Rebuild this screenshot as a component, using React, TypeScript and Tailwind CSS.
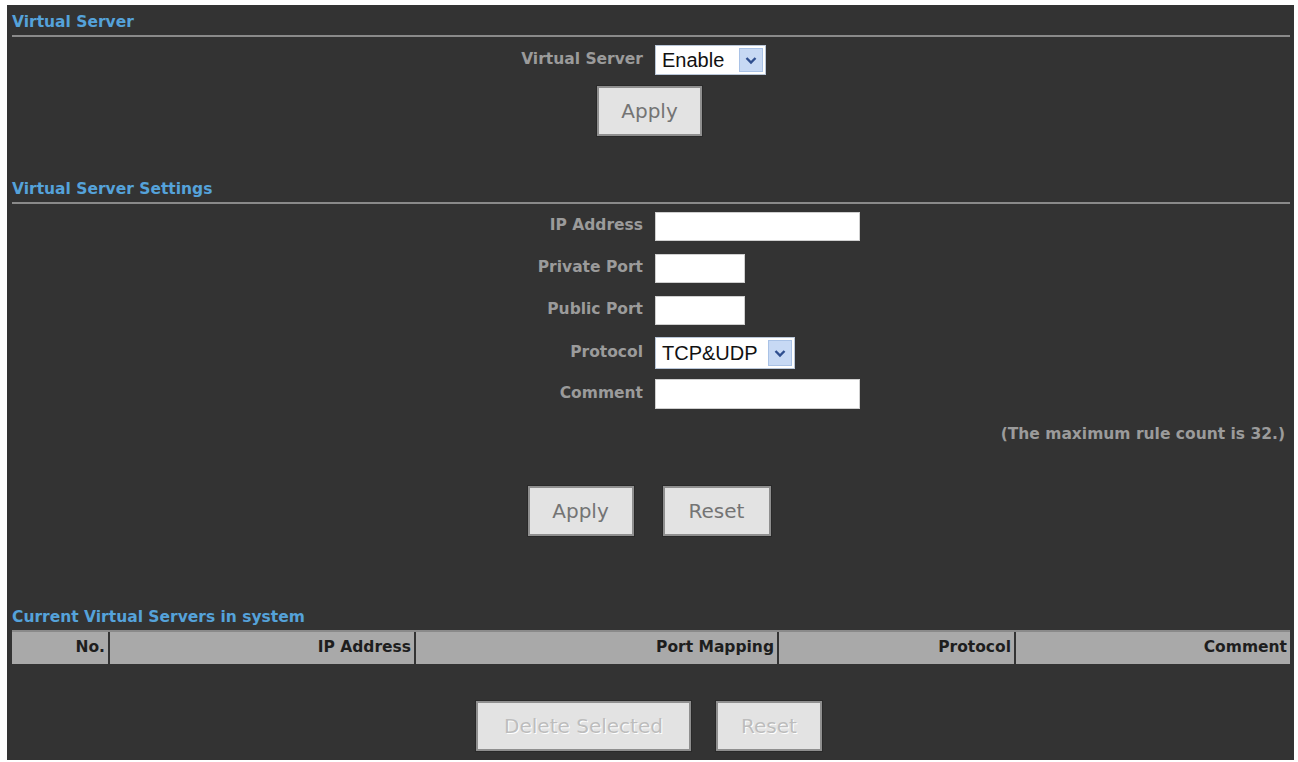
import React from "react";

const labelFont = { fontFamily: '"DejaVu Sans", Verdana, sans-serif' };
const selectFont = { fontFamily: '"Liberation Sans", Arial, sans-serif' };

function SectionTitle({ text, line = true }: { text: string; line?: boolean }) {
  return (
    <div
      className={`text-[15.5px] font-bold leading-[18px] text-[#55a2da] ${
        line ? "pb-[4px] border-b-2 border-[#8a8a8a]" : ""
      }`}
      style={labelFont}
    >
      {text}
    </div>
  );
}

function FakeSelect({ value, width, height }: { value: string; width: string; height: string }) {
  return (
    <div
      className={`flex items-stretch bg-white border border-[#b9c6d8] ${width} ${height}`}
    >
      <div
        className="flex-1 flex items-center pl-[6px] text-[20px] text-[#111] leading-none"
        style={selectFont}
      >
        {value}
      </div>
      <div className="w-[24px] my-[2px] mr-[2px] bg-[#c7d9f4] border border-[#a9c2e6] flex items-center justify-center">
        <svg width="12" height="9" viewBox="0 0 12 9">
          <path d="M1.5 2 L6 6.5 L10.5 2" fill="none" stroke="#2f4f8f" strokeWidth="2.4" />
        </svg>
      </div>
    </div>
  );
}

function Button({
  text,
  width,
  disabled = false,
}: {
  text: string;
  width: string;
  disabled?: boolean;
}) {
  return (
    <div
      className={`h-[50px] ${width} flex items-center justify-center bg-[#e3e3e3] border-2 border-[#8f8f8f] shadow-[0_0_0_1px_#2a2a2a] text-[20px] ${
        disabled ? "text-[#bdbdbd] [text-shadow:1px_1px_0_#ffffff]" : "text-[#747474]"
      }`}
      style={labelFont}
    >
      {text}
    </div>
  );
}

function FormRow({ label, children }: { label: string; children: React.ReactNode }) {
  return (
    <div className="grid grid-cols-2 gap-x-[12px] h-[30px] items-center">
      <div className="text-right text-[15.5px] font-bold text-[#9b9b9b]" style={labelFont}>
        {label}
      </div>
      <div className="flex items-center">{children}</div>
    </div>
  );
}

const columns = [
  { name: "No.", w: "w-[96px]" },
  { name: "IP Address", w: "w-[304px]" },
  { name: "Port Mapping", w: "w-[361px]" },
  { name: "Protocol", w: "w-[235px]" },
  { name: "Comment", w: "w-[274px]" },
];

export default function App() {
  return (
    <div className="bg-white w-[1298px] h-[762px] pt-[5px] pl-[7px]">
      <div className="w-[1287px] h-[755px] bg-[#333333] pl-[5px] pr-[4px] pt-[8px]">
        <SectionTitle text="Virtual Server" />

        <div className="pr-[4px] mt-[8px]">
          <div className="grid grid-cols-2 gap-x-[12px] h-[30px] items-center">
            <div className="text-right text-[15.5px] font-bold text-[#9b9b9b]" style={labelFont}>
              Virtual Server
            </div>
            <FakeSelect value="Enable" width="w-[111px]" height="h-[30px]" />
          </div>
        </div>

        <div className="flex justify-center mt-[11px] pr-[3px]">
          <Button text="Apply" width="w-[105px]" />
        </div>

        <div className="mt-[44px]">
          <SectionTitle text="Virtual Server Settings" />
        </div>

        <div className="pr-[4px] mt-[7px] flex flex-col gap-[12px]">
          <FormRow label="IP Address">
            <div className="w-[205px] h-[29px] bg-white border border-[#cfcfcf]" />
          </FormRow>
          <FormRow label="Private Port">
            <div className="w-[90px] h-[29px] bg-white border border-[#cfcfcf]" />
          </FormRow>
          <FormRow label="Public Port">
            <div className="w-[90px] h-[29px] bg-white border border-[#cfcfcf]" />
          </FormRow>
          <FormRow label="Protocol">
            <FakeSelect value="TCP&UDP" width="w-[140px]" height="h-[32px]" />
          </FormRow>
          <FormRow label="Comment">
            <div className="w-[205px] h-[30px] bg-white border border-[#cfcfcf]" />
          </FormRow>
        </div>

        <div
          className="mt-[16px] text-right pr-[5px] text-[15.5px] font-bold leading-[18px] text-[#9b9b9b]"
          style={labelFont}
        >
          (The maximum rule count is 32.)
        </div>

        <div className="flex justify-center gap-[29px] mt-[43px] pr-[4px]">
          <Button text="Apply" width="w-[106px]" />
          <Button text="Reset" width="w-[108px]" />
        </div>

        <div className="mt-[72px]">
          <SectionTitle text="Current Virtual Servers in system" line={false} />
        </div>

        <div className="mt-[4px] border-t-2 border-[#8a8a8a] flex gap-[2px]">
          {columns.map((c) => (
            <div
              key={c.name}
              className={`${c.w} h-[32px] bg-[#a9a9a9] flex items-center justify-end pr-[3px] text-[15.5px] font-bold text-[#1e1e1e]`}
              style={labelFont}
            >
              {c.name}
            </div>
          ))}
        </div>

        <div className="flex justify-center gap-[25px] mt-[37px] pr-[4px]">
          <Button text="Delete Selected" width="w-[215px]" disabled />
          <Button text="Reset" width="w-[106px]" disabled />
        </div>
      </div>
    </div>
  );
}
